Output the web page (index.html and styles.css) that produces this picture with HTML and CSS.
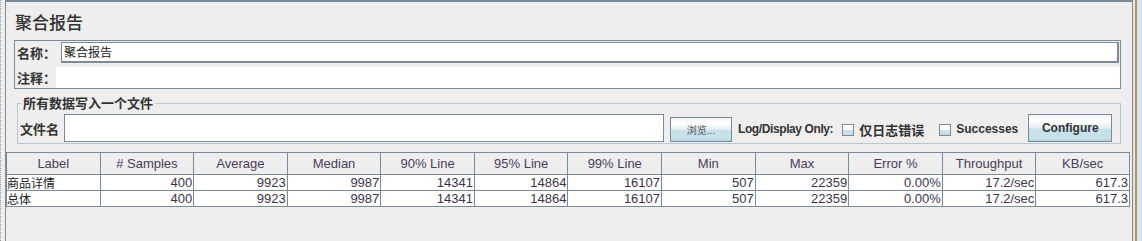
FILE: index.html
```html
<!DOCTYPE html>
<html lang="zh">
<head>
<meta charset="utf-8">
<title>聚合报告</title>
<link rel="stylesheet" href="styles.css">
</head>
<body>
<div class="screen">
  <div class="dots"></div>
  <div class="panel">
    <div class="title">聚合报告</div>
    <div class="names">
      <div class="row row-name">
        <span class="lbl lbl-name">名称：</span>
        <div class="field">聚合报告</div>
      </div>
      <div class="row row-comment">
        <span class="lbl lbl-comment">注释：</span>
        <div class="area"></div>
      </div>
    </div>
    <fieldset class="group">
      <legend>所有数据写入一个文件</legend>
      <div class="filerow">
        <span class="lbl lbl-file">文件名</span>
        <div class="fileinput"></div>
        <button class="btn btn-browse">浏览...</button>
        <span class="logtxt">Log/Display Only:</span>
        <span class="check"></span>
        <span class="chklbl cjk">仅日志错误</span>
        <span class="check check2"></span>
        <span class="chklbl">Successes</span>
        <button class="btn btn-conf">Configure</button>
      </div>
    </fieldset>
    <table class="grid">
      <thead>
        <tr>
          <th>Label</th><th># Samples</th><th>Average</th><th>Median</th><th>90% Line</th><th>95% Line</th><th>99% Line</th><th>Min</th><th>Max</th><th>Error %</th><th>Throughput</th><th>KB/sec</th>
        </tr>
      </thead>
      <tbody>
        <tr>
          <td class="first">商品详情</td><td>400</td><td>9923</td><td>9987</td><td>14341</td><td>14864</td><td>16107</td><td>507</td><td>22359</td><td>0.00%</td><td>17.2/sec</td><td>617.3</td>
        </tr>
        <tr>
          <td class="first">总体</td><td>400</td><td>9923</td><td>9987</td><td>14341</td><td>14864</td><td>16107</td><td>507</td><td>22359</td><td>0.00%</td><td>17.2/sec</td><td>617.3</td>
        </tr>
      </tbody>
    </table>
  </div>
  <div class="side"></div>
</div>
</body>
</html>
```
FILE: styles.css
```css
html, body {
  margin: 0;
  padding: 0;
  background: #eeeeee;
  overflow: hidden;
}
.screen {
  display: flex;
  width: 1142px;
  height: 241px;
  font-family: "Liberation Sans", "Noto Sans CJK SC", sans-serif;
  color: #333;
}
.dots {
  flex: none;
  width: 5px;
  height: 100%;
  box-sizing: border-box;
  border-left: 1px dotted #8f9aa6;
}
.panel {
  flex: none;
  width: 1128px;
  box-sizing: border-box;
  border-top: 2px solid #7a8a99;
  border-left: 1px solid #7a8a99;
  border-right: 1px solid #7a8a99;
  background: #eeeeee;
  display: flex;
  flex-direction: column;
}
.side {
  flex: none;
  width: 9px;
  background: linear-gradient(to right, #e6e6e6 0 2px, #c38c5c 2px 4px, #d4e6ef 4px);
}
.title {
  font-family: "Noto Sans CJK SC", sans-serif;
  font-size: 17px;
  line-height: 20px;
  height: 28px;
  padding: 10px 0 0 9px;
  color: #333;
  font-weight: 500;
}
.names {
  margin-left: 8px;
  width: 1107px;
  height: 49px;
  box-sizing: border-box;
  border: 1px solid #7a8a99;
  display: flex;
  flex-direction: column;
}
.row {
  display: flex;
  align-items: center;
}
.row-name {
  padding-top: 1px;
  height: 21px;
}
.row-comment {
  margin-top: 4px;
  height: 21px;
}
.lbl {
  font-family: "Noto Sans CJK SC", sans-serif;
  font-weight: 700;
  font-size: 13px;
  color: #333;
  flex: none;
}
.lbl-name {
  width: 44px;
  padding-left: 2px;
}
.lbl-comment {
  width: 39px;
  padding-left: 2px;
}
.field {
  width: 1058px;
  height: 21px;
  box-sizing: border-box;
  border: 1px solid #7a8a99;
  border-right-width: 2px;
  border-bottom-width: 2px;
  background: #fff;
  font-family: "Noto Sans CJK SC", sans-serif;
  font-size: 12px;
  line-height: 18px;
  padding-left: 2px;
  color: #222;
}
.area {
  flex: 1;
  height: 21px;
  background: #fff;
}
.group {
  margin: 6px 0 0 11px;
  padding: 3px 0 1px 2px;
  width: 1104px;
  box-sizing: border-box;
  border: 1px solid #b8c7d6;
  min-width: 0;
}
.group legend {
  font-family: "Noto Sans CJK SC", sans-serif;
  font-weight: 700;
  font-size: 13px;
  line-height: 16px;
  padding: 0 2px;
  margin-left: 1px;
  color: #333;
}
.filerow {
  display: flex;
  align-items: center;
  height: 28px;
}
.lbl-file {
  width: 44px;
  padding-left: 0;
}
.fileinput {
  width: 600px;
  height: 28px;
  box-sizing: border-box;
  border: 1px solid #7a8a99;
  background: #fff;
  flex: none;
}
.btn {
  flex: none;
  box-sizing: border-box;
  border: 1px solid #7a8a99;
  background: linear-gradient(to bottom, #f2f5f7 0%, #ffffff 25%, #e2edf2 50%, #c7e0ea 55%, #c7e0ea 92%, #b3cbd6 100%);
  font-family: "Liberation Sans", "Noto Sans CJK SC", sans-serif;
  color: #333;
  padding: 0;
  margin: 0;
}
.btn-browse {
  margin-left: 6px;
  width: 62px;
  height: 25px;
  font-size: 10px;
  color: #555;
  margin-top: 3px;
}
.logtxt {
  margin-left: 6px;
  font-weight: 700;
  font-size: 12px;
  letter-spacing: -0.4px;
  color: #333;
  flex: none;
  margin-top: 2px;
}
.check {
  flex: none;
  margin-left: 9px;
  width: 12px;
  height: 12px;
  box-sizing: border-box;
  border: 1px solid #7a8a99;
  background: linear-gradient(to bottom, #ffffff 0%, #ffffff 45%, #cfe3ec 55%, #c3dce8 100%);
  margin-top: 3px;
}
.check2 {
  margin-left: 15px;
}
.chklbl {
  flex: none;
  margin-left: 5px;
  font-weight: 700;
  font-size: 12px;
  color: #333;
  margin-top: 2px;
}
.chklbl.cjk {
  font-family: "Noto Sans CJK SC", sans-serif;
  font-size: 13px;
}
.btn-conf {
  margin-left: 10px;
  width: 84px;
  height: 28px;
  font-weight: 700;
  font-size: 12px;
}
.grid {
  margin-top: 8px;
  width: 1124px;
  table-layout: fixed;
  border-collapse: collapse;
  border: 1px solid #7a8a99;
  font-size: 13px;
  color: #3b3350;
}
.grid th, .grid td {
  border: 1px solid #7a8a99;
  padding: 0 1px;
  white-space: nowrap;
  overflow: hidden;
}
.grid th {
  height: 21px;
  font-weight: 400;
  text-align: center;
  background: #eeeeee;
  color: #4a3d5c;
}
.grid td {
  height: 15px;
  line-height: 15px;
  text-align: right;
  background: #fff;
}
.grid td.first {
  text-align: left;
  font-family: "Noto Sans CJK SC", sans-serif;
  font-size: 12px;
  line-height: 15px;
  color: #222;
  padding-left: 0;
}
```
